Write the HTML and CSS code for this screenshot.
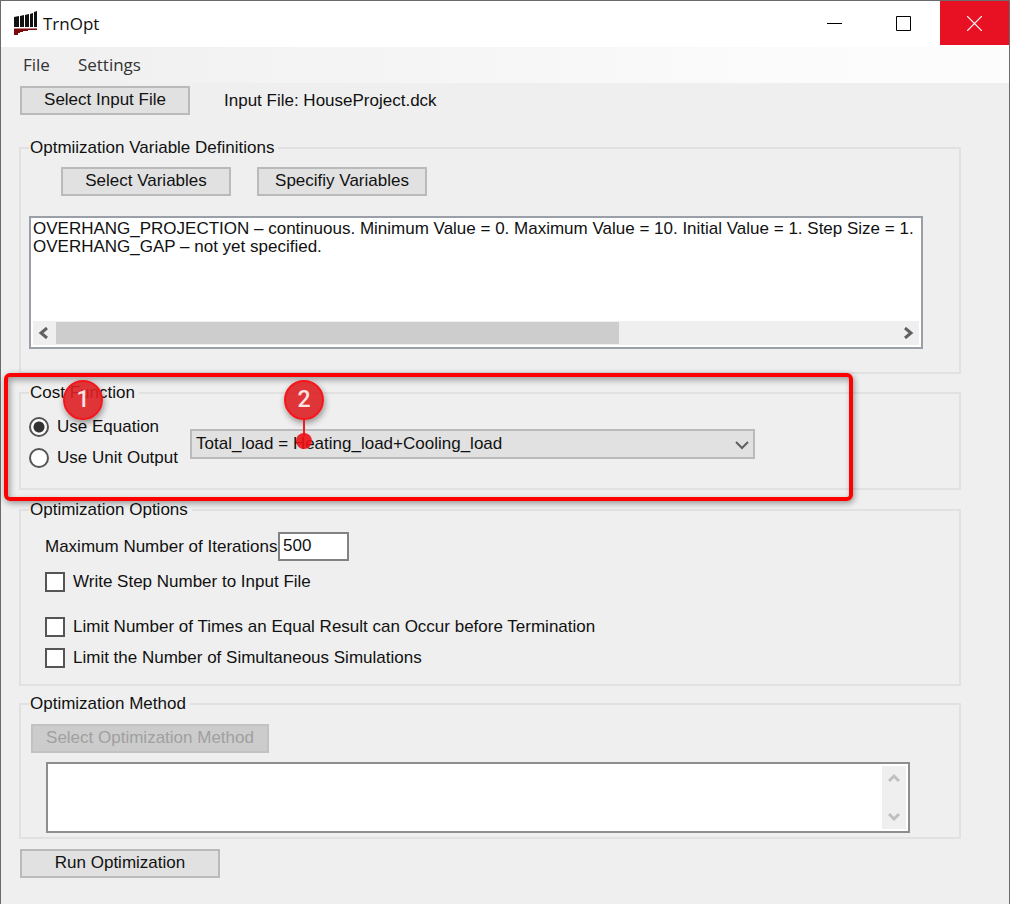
FILE: index.html
```html
<!DOCTYPE html>
<html lang="en">
<head>
    <meta charset="UTF-8">
    <meta name="viewport" content="width=device-width, initial-scale=1.0">
    <title>TrnOpt</title>
    <link rel="stylesheet" href="styles.css">
</head>
<body>
    <div class="window">
        <header class="title-bar">
            <svg class="app-icon" width="24" height="24" viewBox="0 0 24 24">
                <path d="M0 6l5-1v11H0zM6 5l4-1v12H6zM11 4l4-1v13h-4zM16 3l3-1v14h-3zM20 1l3-1v16h-3z" fill="#111"/>
                <path d="M0 18h23v1H14v1H9v1H6v1H4v2H0z" fill="#7d0a0a"/>
                <path d="M0 17.5h23" stroke="#b98080"/>
            </svg>
            <h1 class="title">TrnOpt</h1>
            <button class="window-button" aria-label="Minimize">
                <svg width="15" height="15"><path d="M0 7.5h15" stroke="#000"/></svg>
            </button>
            <button class="window-button" aria-label="Maximize">
                <svg width="15" height="15"><path d="M.5.5h14v14H.5z" fill="none" stroke="#000"/></svg>
            </button>
            <button class="window-button close" aria-label="Close">
                <svg width="15" height="15"><path d="M0 0l15 15M15 0L0 15" stroke="#fff" stroke-width="1.2"/></svg>
            </button>
        </header>

        <nav class="menu-bar">
            <button class="menu-item">File</button>
            <button class="menu-item">Settings</button>
        </nav>

        <main class="content">
            <div class="input-file">
                <button class="button">Select Input File</button>
                <span>Input File: HouseProject.dck</span>
            </div>

            <fieldset class="group variables">
                <legend>Optmiization Variable Definitions</legend>
                <div class="variable-buttons">
                    <button class="button">Select Variables</button>
                    <button class="button">Specifiy Variables</button>
                </div>
                <div class="list-box">
                    <ul class="variable-list">
                        <li>OVERHANG_PROJECTION – continuous. Minimum Value = 0. Maximum Value = 10. Initial Value = 1. Step Size = 1.</li>
                        <li>OVERHANG_GAP – not yet specified.</li>
                    </ul>
                    <div class="scroll-x">
                        <svg width="10" height="12"><path d="M9 1L3 6l6 5" fill="none" stroke="#606060" stroke-width="3"/></svg>
                        <div class="track"><div class="thumb"></div></div>
                        <svg width="10" height="12"><path d="M1 1l6 5-6 5" fill="none" stroke="#606060" stroke-width="3"/></svg>
                    </div>
                </div>
            </fieldset>

            <div class="cost-area">
                <fieldset class="group cost">
                    <legend>Cost Function</legend>
                    <div class="cost-row">
                        <div class="radios">
                            <label class="option"><input type="radio" name="cost" checked> Use Equation</label>
                            <label class="option"><input type="radio" name="cost"> Use Unit Output</label>
                        </div>
                        <div class="equation">
                            <select class="select" aria-label="Equation">
                                <option>Total_load = Heating_load+Cooling_load</option>
                            </select>
                            <svg class="arrow" width="14" height="9"><path d="M1 1l6 6 6-6" fill="none" stroke="#606060" stroke-width="2"/></svg>
                        </div>
                    </div>
                </fieldset>
                <!-- Step markers over the group -->
                <div class="highlight"></div>
                <div class="marker one">1</div>
                <div class="marker two">2</div>
            </div>

            <fieldset class="group options">
                <legend>Optimization Options</legend>
                <div class="options-list">
                    <div class="iterations">
                        <label for="iterations">Maximum Number of Iterations</label>
                        <input class="number" id="iterations" type="text" value="500">
                    </div>
                    <label class="option step-number"><input type="checkbox"> Write Step Number to Input File</label>
                    <label class="option"><input type="checkbox"> Limit Number of Times an Equal Result can Occur before Termination</label>
                    <label class="option"><input type="checkbox"> Limit the Number of Simultaneous Simulations</label>
                </div>
            </fieldset>

            <fieldset class="group method">
                <legend>Optimization Method</legend>
                <button class="button wide" disabled>Select Optimization Method</button>
                <div class="method-box">
                    <textarea class="method-text" aria-label="Optimization Method"></textarea>
                    <div class="scroll-y">
                        <svg width="12" height="10"><path d="M1 8l5-5 5 5" fill="none" stroke="#bfbfbf" stroke-width="3"/></svg>
                        <svg width="12" height="10"><path d="M1 2l5 5 5-5" fill="none" stroke="#bfbfbf" stroke-width="3"/></svg>
                    </div>
                </div>
            </fieldset>

            <button class="button run">Run Optimization</button>
        </main>
    </div>
</body>
</html>
```
FILE: styles.css
```css
* {
    box-sizing: border-box;
}
body {
    margin: 0;
    font-family: "Liberation Sans", Arial, sans-serif;
    font-size: 17px;
    line-height: 20px;
    color: #111;
}
button, input, select, textarea {
    font: inherit;
    color: inherit;
    margin: 0;
}
.window {
    min-height: 100vh;
    background: #efefef;
    border: 1px solid #6b6b6b;
    border-bottom: none;
}
/* Title bar and menu */
.title-bar {
    display: flex;
    align-items: flex-start;
    height: 46px;
    padding-left: 13px;
    background: white;
}
.app-icon {
    margin-top: 10px;
}
.title {
    flex: 1;
    margin: 0 0 0 5px;
    font-family: "Open Sans", sans-serif;
    font-size: 17px;
    font-weight: normal;
    line-height: 46px;
}
.window-button {
    display: flex;
    align-items: center;
    justify-content: center;
    width: 69px;
    height: 44px;
    padding: 0;
    border: none;
    background: white;
}
.close {
    margin-left: 2px;
    background: #e81123;
}
.menu-bar {
    display: flex;
    gap: 28px;
    height: 36px;
    padding: 0 22px;
    background: linear-gradient(to right, #efefef, #fcfcfc 85%);
}
.menu-item {
    padding: 0;
    border: none;
    background: none;
    font-family: "Open Sans", sans-serif;
    font-size: 17px;
    color: #333;
}
/* Form */
.content {
    padding: 3px 48px 24px 18px;
}
.button {
    width: 170px;
    height: 29px;
    padding: 0 0 2px;
    border: 2px solid #bababa;
    background: #e1e1e1;
}
.button:disabled {
    border-color: #c2c2c2;
    background: #cccccc;
    color: #a0a0a0;
}
.button.wide {
    width: 238px;
}
.button.run {
    width: 200px;
    margin-left: 1px;
}
.input-file {
    display: flex;
    align-items: center;
    gap: 34px;
    margin: 0 0 23px 1px;
}
.group {
    min-width: 0;
    margin: 0;
    padding: 0 8px;
    border: 2px solid #e1e1e1;
}
.group legend {
    padding: 0 4px 0 1px;
}
.variables {
    height: 236px;
    margin-bottom: 9px;
}
.variable-buttons {
    display: flex;
    gap: 26px;
    padding: 9px 0 20px 32px;
}
.list-box {
    margin-right: 28px;
    padding: 2px;
    border: 2px solid #9a9fa8;
    background: white;
}
.variable-list {
    height: 101px;
    margin: 0;
    padding: 0;
    list-style: none;
    line-height: 18px;
    white-space: nowrap;
    overflow: hidden;
}
.scroll-x {
    display: flex;
    align-items: center;
    gap: 8px;
    height: 24px;
    padding: 0 5px;
    background: #efefef;
}
.track {
    flex: 1;
    height: 22px;
}
.thumb {
    width: 67%;
    height: 100%;
    background: #cdcdcd;
}
.cost-area {
    position: relative;
    margin-bottom: 10px;
}
.cost {
    height: 107px;
}
.cost-row {
    display: flex;
    gap: 9px;
}
.radios {
    display: flex;
    flex-direction: column;
    gap: 11px;
    width: 152px;
    padding-top: 14px;
}
.option {
    display: flex;
    align-items: center;
    gap: 8px;
    white-space: nowrap;
}
.option input {
    appearance: none;
    flex: none;
    width: 20px;
    height: 20px;
    border: 2px solid #555;
    background: white;
}
.option input[type="radio"] {
    border-radius: 50%;
}
.option input[type="radio"]:checked {
    background: radial-gradient(circle, #333 5px, white 6px);
}
.equation {
    position: relative;
    flex: 1;
    margin: 26px 196px 0 0;
}
.select {
    appearance: none;
    width: 100%;
    height: 30px;
    padding: 0 30px 0 4px;
    border: 2px solid #bababa;
    border-radius: 0;
    background: #e1e1e1;
}
.arrow {
    position: absolute;
    right: 6px;
    top: 12px;
    pointer-events: none;
}
/* Annotations */
.highlight {
    position: absolute;
    inset: -10px 108px -11px -15px;
    border: 4px solid #ff0000;
    border-radius: 6px;
    box-shadow: 1px 2px 6px rgba(0,0,0,0.4), inset 2px 3px 6px rgba(0,0,0,0.35);
    pointer-events: none;
}
.marker {
    position: absolute;
    top: -3px;
    width: 40px;
    height: 40px;
    border: 2px solid #f3171c;
    border-radius: 50%;
    background: rgba(222,32,36,0.9);
    box-shadow: 1px 3px 6px rgba(0,0,0,0.4);
    color: #fbe4e4;
    font-family: Roboto, sans-serif;
    font-size: 23px;
    font-weight: 500;
    line-height: 36px;
    text-align: center;
}
.one {
    left: 44px;
}
.two {
    left: 265px;
}
.two::before {
    content: "";
    position: absolute;
    left: 17px;
    top: 38px;
    width: 2px;
    height: 16px;
    background: #ee1c20;
}
.two::after {
    content: "";
    position: absolute;
    left: 10px;
    top: 51px;
    width: 16px;
    height: 16px;
    border-radius: 50%;
    background: rgba(238,16,20,0.9);
}
.options {
    height: 186px;
    margin-bottom: 8px;
}
.options-list {
    padding: 12px 0 0 16px;
}
.iterations {
    display: flex;
    align-items: center;
    margin-bottom: 11px;
}
.iterations label {
    width: 233px;
    white-space: nowrap;
}
.number {
    width: 71px;
    height: 29px;
    padding: 0 3px 2px;
    border: 2px solid #828282;
    background: white;
}
.options .option {
    margin-bottom: 11px;
}
.options .step-number {
    margin-bottom: 25px;
}
.method {
    height: 145px;
    margin-bottom: 10px;
}
.method .button {
    margin: 10px 0 0 2px;
}
.method-box {
    display: flex;
    height: 71px;
    margin: 9px 41px 0 17px;
    padding: 2px;
    border: 2px solid #8e8e8e;
    background: white;
}
.method-text {
    flex: 1;
    padding: 0;
    border: none;
    resize: none;
    outline: none;
}
.scroll-y {
    display: flex;
    flex-direction: column;
    align-items: center;
    justify-content: space-between;
    width: 24px;
    padding: 7px 0;
    background: #efefef;
}
```
